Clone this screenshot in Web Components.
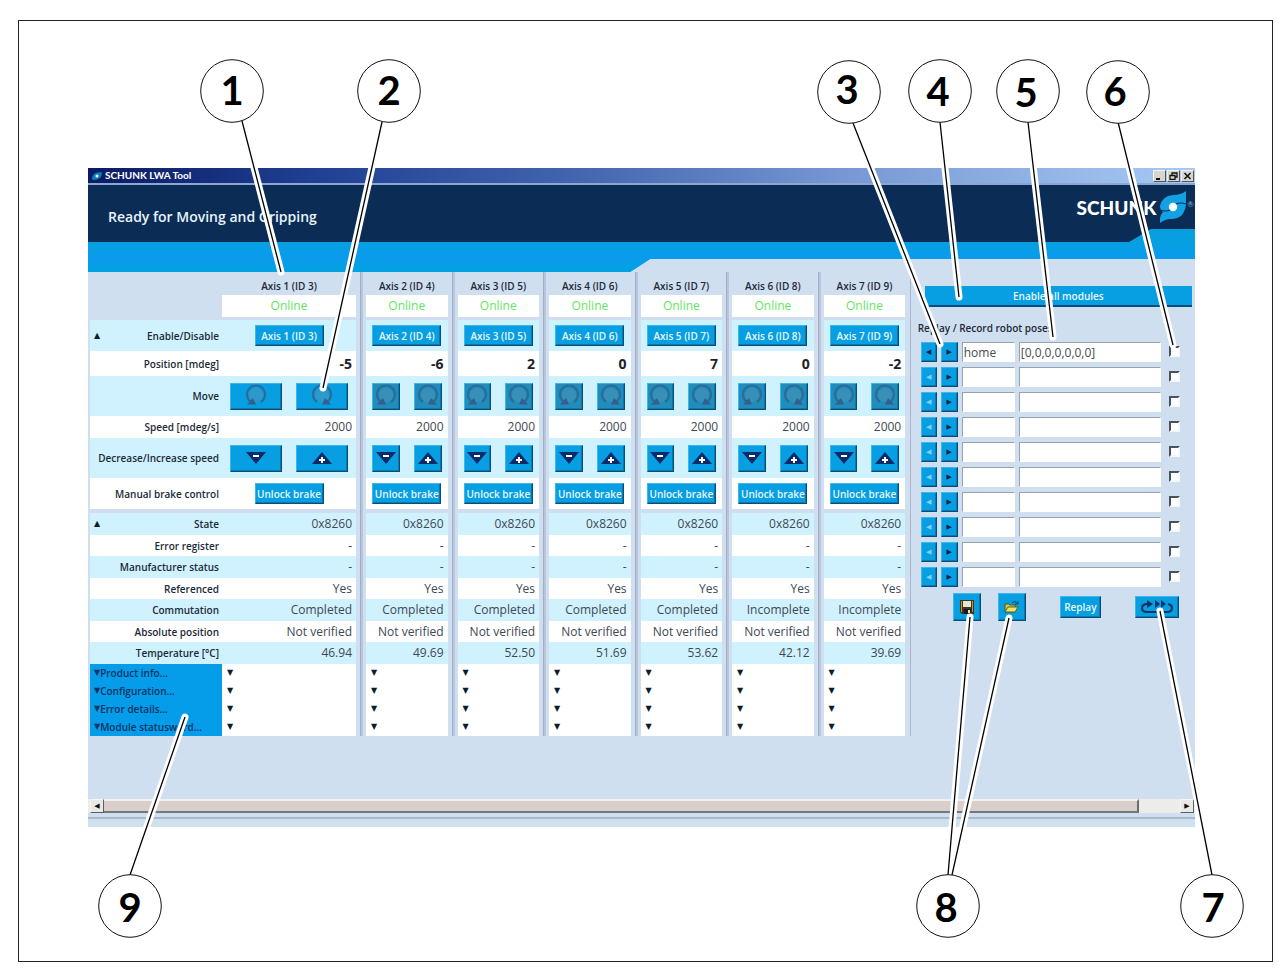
<!DOCTYPE html>
<html lang="en">
<head>
<meta charset="utf-8">
<title>SCHUNK LWA Tool</title>
<style>
body { margin: 0; background: #fff; font-family: "Open Sans", "Noto Sans", sans-serif; color: #1c2a38; }
</style>
</head>
<body>
<annotated-figure>
  <app-window>
    <title-bar slot="title">SCHUNK LWA Tool</title-bar>
    <app-header slot="header">Ready for Moving and Gripping</app-header>
    <axis-table slot="main"></axis-table>
    <pose-panel slot="side"></pose-panel>
    <scroll-strip slot="footer"></scroll-strip>
  </app-window>
</annotated-figure>

<script>
const define = (name, render) => customElements.define(name, class extends HTMLElement {
  constructor() {
    super();
    this.attachShadow({ mode: 'open' }).innerHTML = render();
  }
});

const buttonCss = `
  * { box-sizing: border-box; }
  button {
    font: 600 10px/16px "Open Sans", sans-serif; color: #e6f8ff; margin: 0; padding: 0;
    display: flex; align-items: center; justify-content: center; white-space: nowrap;
    background: #079ee2; border: 1px solid; border-color: #3bb7ee #0a4d78 #0a4d78 #3bb7ee;
    box-shadow: inset -1px -1px #0b78ae; border-radius: 0;
  }
  button svg { display: block; flex: none; }`;

/* Numbered callouts: label, circle centre, digit anchor, pointer lines */
const callouts = [
  ['1', 232, 91, 232, 105, [[242, 121, 281, 272]]],
  ['2', 389, 91, 389, 105, [[382, 122, 323, 388]]],
  ['3', 849, 92, 847, 104, [[853, 123, 940, 344]]],
  ['4', 940, 91, 938, 106, [[940, 122, 959, 297]]],
  ['5', 1028, 91, 1026, 107, [[1028, 122, 1053, 337]]],
  ['6', 1118, 92, 1115, 106, [[1118, 122, 1173, 345]]],
  ['9', 130, 906, 130, 922, [[130, 875, 185, 717]]],
  ['8', 948, 906, 946, 922, [[948, 875, 970, 617], [952, 875, 1009, 618]]],
  ['7', 1212, 906, 1213, 922, [[1212, 875, 1160, 611]]]
];

define('annotated-figure', () => {
  const lines = callouts.flatMap(c => c[5]).map(l => `M${l[0]} ${l[1]}L${l[2]} ${l[3]}`).join('');
  return `<style>
    :host { display: block; position: relative; padding: 20px 15px 16px 18px; }
    .frame { border: 1px solid #222; padding: 147px 77px 134px 69px; }
    svg { position: absolute; inset: 0; width: 100%; height: 100%; pointer-events: none; }
    text { font: 700 40px Lato, sans-serif; text-anchor: middle; fill: #000; }
  </style>
  <div class="frame"><slot></slot></div>
  <svg aria-hidden="true">
    <path d="${lines}" stroke="#fff" stroke-width="7" stroke-linecap="round"/>
    <path d="${lines}" stroke="#000" stroke-width="1.3"/>
    ${callouts.map(c => `<circle cx="${c[1]}" cy="${c[2]}" r="31.3" fill="#fff" stroke="#111"/>
      <text x="${c[3]}" y="${c[4]}">${c[0]}</text>`).join('')}
  </svg>`;
});

define('app-window', () => `<style>
    :host { display: block; background: #d0dff0; }
    .body { display: grid; grid-template-columns: 820fr 284fr; padding: 0 0 63px 2px; }
  </style>
  <slot name="title"></slot><slot name="header"></slot>
  <div class="body"><slot name="main"></slot><slot name="side"></slot></div>
  <slot name="footer"></slot>`);

define('title-bar', () => `<style>
    ${buttonCss}
    :host { display: flex; box-sizing: border-box; align-items: center; height: 17px; padding: 0 1px 0 4px; gap: 3px;
      background: linear-gradient(90deg, #0a1b62, #1f3f92 20%, #4467b0 45%, #7697d2 68%, #a6caf5);
      border-bottom: 2px solid #8ea6d2; color: #fff; font: 700 10px/15px Lato, sans-serif; }
    .name { flex: 1; }
    .controls { display: flex; gap: 1px; }
    button { width: 13px; height: 12px; background: #d8d4d0; border-color: #f4f2f0 #555 #555 #f4f2f0; box-shadow: none; }
  </style>
  <svg width="10" height="10" viewBox="0 0 10 10"><path d="M0 8Q0 1 9 1L10 2Q10 9 1 9Z" fill="#087db8"/><circle cx="5" cy="5" r="1.5" fill="#fff"/></svg>
  <span class="name"><slot></slot></span>
  <span class="controls">
    <button aria-label="Minimize"><svg width="9" height="8"><path d="M1 7H5" stroke="#111" stroke-width="2"/></svg></button>
    <button aria-label="Restore"><svg width="9" height="8"><path d="M3 3V1H8V5H6M1 3.500H6V7.500H1Z" fill="none" stroke="#111" stroke-width="1.300"/></svg></button>
    <button aria-label="Close"><svg width="9" height="8"><path d="M1.500 1L7.500 7M7.500 1L1.500 7" stroke="#111" stroke-width="1.500"/></svg></button>
  </span>`);

define('app-header', () => `<style>
    :host { display: block; height: 87px;
      background: linear-gradient(#06a0e0 57px, #0a9bec 72px, #03a2e0);
      clip-path: polygon(0 0, 100% 0, 100% 74px, 50.8% 74px, 49% 87px, 0 87px); }
    .bar { box-sizing: border-box; height: 57px; background: #0a2c55; color: #e9f3fb; display: flex; justify-content: space-between;
      padding: 0 1px 0 20px;
      clip-path: polygon(0 0, 100% 0, 100% 44px, calc(100% - 44px) 44px, calc(100% - 66px) 57px, 0 57px); }
    h1 { margin: 22px 0 0; font: 600 14px/20px "Open Sans", sans-serif; }
    .logo { display: flex; align-items: flex-start; gap: 3px; padding-top: 5px; }
    .logo b { font: 900 19px/36px Lato, sans-serif; color: #fff; }
    .logo small { font: 8px/12px Lato, sans-serif; margin: 8px 0 0 -3px; color: #7fb7dd; }
  </style>
  <div class="bar"><h1><slot></slot></h1>
    <div class="logo"><b>SCHUNK</b>
      <svg width="28" height="34" viewBox="0 0 28 34" aria-hidden="true">
        <path d="M27 1L27 15Q26 22 22 26Q18 29 12 29Q6 29 1 33L1 28Q2 24 4 22Q1 20 1 16Q3 6 14 5Q22 5 27 1Z" fill="#12a1e3"/>
        <path d="M1 20Q7 22 11 20M17 14Q21 12 27 14" fill="none" stroke="#0a2c55" stroke-width="1.200"/>
        <circle cx="14" cy="17" r="4.200" fill="#fff"/>
      </svg><small>®</small>
    </div>
  </div>`);

const axes = [
  [1, 3, '-5', 'Completed', '46.94'], [2, 4, '-6', 'Completed', '49.69'], [3, 5, '2', 'Completed', '52.50'],
  [4, 6, '0', 'Completed', '51.69'], [5, 7, '7', 'Completed', '53.62'], [6, 8, '0', 'Incomplete', '42.12'],
  [7, 9, '-2', 'Incomplete', '39.69']
];

const turn = flip => `<svg width="22" height="24" viewBox="0 0 22 24"><g ${flip ? 'transform="matrix(-1 0 0 1 22 0)"' : ''}>
  <circle cx="11" cy="11" r="7" fill="#4c93b6" opacity=".55"/>
  <path d="M6 18A9 9 0 1 1 16 18" fill="none" stroke="#2b6c98" stroke-width="2.200"/>
  <path d="M2 20.500H11L8 14Z" fill="#335f8e"/></g></svg>`;
const down = `<svg width="22" height="14" viewBox="0 0 22 14"><path d="M1 1H21L11 13Z" fill="#0a2a6b"/><path d="M8 5H14" stroke="#fff" stroke-width="2"/></svg>`;
const up = `<svg width="22" height="14" viewBox="0 0 22 14"><path d="M1 13H21L11 1Z" fill="#0a2a6b"/><path d="M8 9H14M11 6V12" stroke="#fff" stroke-width="2"/></svg>`;

define('axis-table', () => {
  const name = a => `Axis ${a[0]} (ID ${a[1]})`;
  const row = (cls, label, cell, extra = {}) =>
    `<tr class="${cls}"><th scope="row">${extra.lead || ''}${label}</th>${axes.map(a =>
      `<td>${cell(a)}</td>${extra.gap || ''}`).join('')}</tr>`;
  const fold = { lead: '<button class="fold" aria-label="Collapse section">▲</button>' };
  const pair = (l, r, ln, rn) => a => `<div class="pair"><button aria-label="${ln} ${name(a)}">${l}</button><button aria-label="${rn} ${name(a)}">${r}</button></div>`;
  return `<style>
    ${buttonCss}
    :host { display: block; min-width: 0; }
    table { width: 100%; table-layout: fixed; border-collapse: collapse; }
    col.label { width: 132px; } col.first { width: 134px; } col.gap { width: 10px; } col.end { width: 5px; }
    th, td { padding: 0 3px; text-align: right; vertical-align: middle; white-space: nowrap; overflow: hidden; }
    th { font: 600 10px/16px "Open Sans", sans-serif; position: relative; }
    td { padding: 0 4px; font: 12px/18px "Open Sans", sans-serif; color: #3d4853; }
    thead th { text-align: center; height: 23px; padding: 4px 0 0; }
    .online td { height: 22px; background: #fff; text-align: center; color: #5fe65f; }
    .space td { height: 3px; line-height: 0; padding: 0; background: #d0dff0; }
    .space.low td { height: 4px; }
    .cyan > * { background: #d0f2ff; } .white > * { background: #fff; }
    .enable > *, .brake > * { height: 31px; }
    .position > * { height: 25px; } .position td { font-weight: 700; font-size: 14px; color: #1d2228; }
    .move > *, .step > * { height: 40px; }
    .speed > * { height: 22px; }
    .odd > * { height: 22px; } .even > * { height: 21px; }
    .more > * { height: 18px; background: #fff; text-align: left; padding: 0 4px; }
    .more > th { background: #059cea; color: #0b335f; }
    .enable td button, .brake td button { width: 69px; height: 21px; margin: 0 auto; }
    .enable td, .brake td, .move td, .step td { padding: 0 6px; }
    .move td:first-of-type, .step td:first-of-type { padding: 0 8px; }
    .pair { display: flex; gap: 14px; } .pair button { flex: 1; height: 27px; }
    .move td:not(:first-of-type) button { background: #218dbb; }
    .fold { background: none; border: 0; box-shadow: none; color: #0c1c2c; font: 8px/16px "DejaVu Sans", sans-serif; width: 8px; }
    th .fold { position: absolute; left: 3px; top: 0; bottom: 0; }
    .more th button { font: inherit; color: inherit; background: none; border: 0; box-shadow: none; }
    .more i { font: 8px/16px "DejaVu Sans", sans-serif; }
    table td.gap { padding: 0; background: #d0dff0 linear-gradient(90deg, #d0dff0 4px, #a0aec6 4px, #a0aec6 5px, #b9c5dc 5px, #b9c5dc 7px, #d0dff0 7px); }
    table td.gap:last-child { background: #d0dff0; border-right: 1px solid #a9b6cb; }
  </style>
  <table>
    <colgroup><col class="label"><col class="first">${'<col class="gap"><col>'.repeat(6)}<col class="end"></colgroup>
    <thead><tr><th></th>${axes.map(a => `<th scope="col">${name(a)}</th><td class="gap"></td>`).join('')}</tr></thead>
    <tbody>
    ${row('online', '', () => 'Online', { gap: '<td class="gap" rowspan="20"></td>' })}
    <tr class="space">${'<td></td>'.repeat(8)}</tr>
    ${row('enable cyan', 'Enable/Disable', a => `<button>${name(a)}</button>`, fold)}
    ${row('position white', 'Position [mdeg]', a => a[2])}
    ${row('move cyan', 'Move', pair(turn(false), turn(true), 'Move left', 'Move right'))}
    ${row('speed white', 'Speed [mdeg/s]', () => '2000')}
    ${row('step cyan', 'Decrease/Increase speed', pair(down, up, 'Slower', 'Faster'))}
    ${row('brake white', 'Manual brake control', () => '<button>Unlock brake</button>')}
    <tr class="space low">${'<td></td>'.repeat(8)}</tr>
    ${row('odd cyan', 'State', () => '0x8260', fold)}
    ${row('even white', 'Error register', () => '-')}
    ${row('odd cyan', 'Manufacturer status', () => '-')}
    ${row('even white', 'Referenced', () => 'Yes')}
    ${row('odd cyan', 'Commutation', a => a[3])}
    ${row('even white', 'Absolute position', () => 'Not verified')}
    ${row('odd cyan', 'Temperature [°C]', a => a[4])}
    ${['Product info...', 'Configuration...', 'Error details...', 'Module statusword...'].map(t =>
      row('more', `<button><i>▼</i>${t}</button>`, () => `<button class="fold" aria-label="Expand ${t}">▼</button>`)).join('')}
    </tbody>
  </table>`;
});

define('pose-panel', () => `<style>
    ${buttonCss}
    :host { display: block; min-width: 0; padding: 14px 3px 0 7px; }
    .all { height: 21px; margin-left: 7px; width: calc(100% - 7px); border-width: 0 0 2px; box-shadow: none; }
    h2 { margin: 13px 0 6px; font: 600 10px/16px "Open Sans", sans-serif; }
    .poses { display: grid; gap: 5px; padding: 0 12px 0 3px; }
    .pose { display: grid; grid-template-columns: 16px 17px 53px 1fr 11px; column-gap: 4px; align-items: center; }
    .pose button { height: 20px; font: 7px/10px "DejaVu Sans", sans-serif; color: #06204a; }
    .pose button:disabled { color: #7dd0f3; }
    input { margin: 0; border-radius: 0; min-width: 0; }
    input[type=text] { height: 20px; padding: 0 1px; background: #fff; color: #454b52; font: 12px/18px "Open Sans", sans-serif;
      border: 1px solid; border-color: #97a2b0 #fff #fff #97a2b0; }
    .pose input:nth-of-type(2) { margin-right: 4px; }
    input[type=checkbox] { appearance: none; width: 11px; height: 11px; background: #fff; border: 2px solid; border-color: #48515c #f4f8fb #f4f8fb #48515c; align-self: start; margin-top: 4px; }
    .actions { display: grid; grid-template-columns: 28px 28px 1fr 44px; column-gap: 17px; align-items: center; padding: 6px 13px 0 35px; }
    .actions button { height: 22px; }
    .actions button:nth-child(-n+2) { height: 28px; }
    .actions button:nth-child(3) { width: 41px; justify-self: center; }
  </style>
  <button class="all">Enable all modules</button>
  <h2>Replay / Record robot poses</h2>
  <div class="poses">${Array.from({ length: 10 }, (_, i) => `<div class="pose">
    <button aria-label="Record pose ${i + 1}" ${i ? 'disabled' : ''}>◀</button><button aria-label="Replay pose ${i + 1}">▶</button>
    <input type="text" aria-label="Pose ${i + 1} name" value="${i ? '' : 'home'}">
    <input type="text" aria-label="Pose ${i + 1} values" value="${i ? '' : '[0,0,0,0,0,0,0]'}">
    <input type="checkbox" aria-label="Select pose ${i + 1}"></div>`).join('')}</div>
  <div class="actions">
    <button aria-label="Save"><svg width="16" height="16"><path d="M1 1H15V15H3L1 13Z" fill="#3b3620"/><path d="M4 2H12V8H4Z" fill="#e9e4cf"/><path d="M2.500 2V13M13.500 2V13" stroke="#c8922c"/><path d="M5 10H12V15H5Z" fill="#17191c"/><path d="M9 11H11V14H9Z" fill="#e8e8e8"/></svg></button>
    <button aria-label="Open"><svg width="17" height="14"><path d="M2 12V4H6L7 5H12V12Z" fill="#d9c63e" stroke="#485c27"/><path d="M2 12L5 7H15L12 12Z" fill="#eee46f" stroke="#5b6322"/><path d="M9 3Q12 0 15 4M15 1V4H12" fill="none" stroke="#133d5e"/></svg></button>
    <button>Replay</button>
    <button aria-label="Replay in a loop"><svg width="34" height="16" viewBox="0 0 34 16"><path d="M7 5H6Q2 6 2 9Q2 13 7 13H27Q32 13 32 9Q32 6 28 5" fill="none" stroke="#0a3565" stroke-width="2.200"/><path d="M7 1L13 5L7 9ZM15 1L20 5L15 9ZM21 1L26 5L21 9Z" fill="#0a3565"/></svg></button>
  </div>`);

define('scroll-strip', () => `<style>
    ${buttonCss}
    :host { display: block; }
    .bar { display: flex; height: 14px; padding: 0 1px 0 2px; background: #ececea; }
    .thumb { flex: 1; background: #d8ceca; border: solid; border-width: 2px 2px 2px 0; border-color: #f4f0ee #6c6c6e #77777a #f4f0ee; margin-right: 41px; }
    button { width: 14px; height: 14px; background: #e9e9e6; border-color: #f5f5f5 #596060 #596060 #f5f5f5; box-shadow: none; color: #111; font: 7px/10px "DejaVu Sans", sans-serif; }
    .status { height: 10px; margin-top: 4px; border-top: 2px solid #a9b9cf; background: #cfe0ef; }
  </style>
  <div class="bar"><button aria-label="Scroll left">◀</button><div class="thumb"></div><button aria-label="Scroll right">▶</button></div>
  <div class="status"></div>`);
</script>
</body>
</html>
